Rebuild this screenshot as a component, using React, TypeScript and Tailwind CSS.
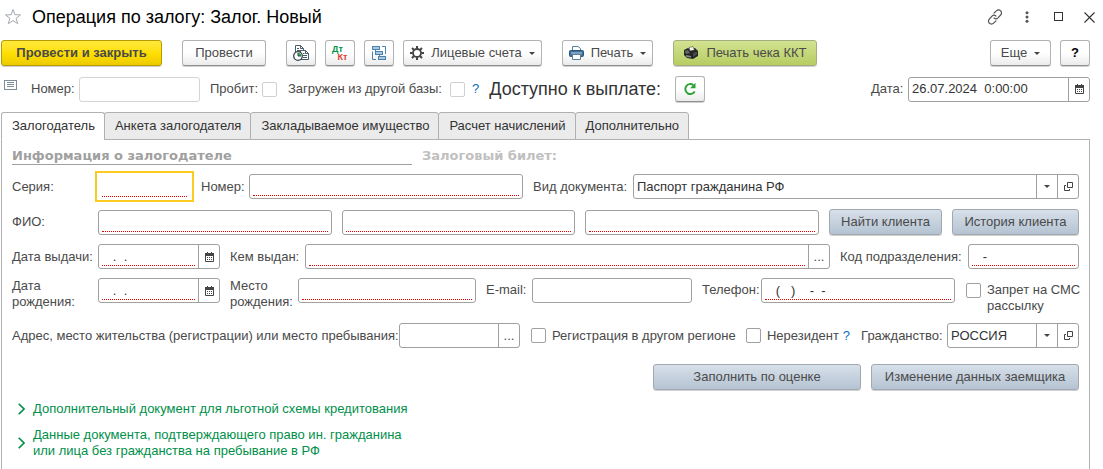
import { useState, type ReactNode } from 'react';
import { clsx } from 'clsx';

const TABS = [
  'Залогодатель',
  'Анкета залогодателя',
  'Закладываемое имущество',
  'Расчет начислений',
  'Дополнительно',
];

/* ---------- icons ---------- */

function StarIcon() {
  return (
    <svg width="18" height="18" viewBox="0 0 18 18" fill="none" stroke="#a3a9b0" strokeWidth="1">
      <path d="M9 1.5l1.9 5.2 5.6.2-4.4 3.4 1.6 5.4L9 12.6l-4.7 3.1 1.6-5.4L1.5 6.9l5.6-.2z" />
    </svg>
  );
}

function LinkIcon() {
  return (
    <svg width="16" height="16" viewBox="0 0 16 16" fill="none" stroke="#555" strokeWidth="1.2" strokeLinecap="round">
      <path d="M7 4.2l2.4-2.4a2.9 2.9 0 0 1 4.2 0 2.9 2.9 0 0 1 0 4.2L11 8.8a2.9 2.9 0 0 1-3.9.2" />
      <path d="M9 11.8l-2.4 2.4a2.9 2.9 0 0 1-4.2 0 2.9 2.9 0 0 1 0-4.2L5 7.2A2.9 2.9 0 0 1 8.9 7" />
    </svg>
  );
}

function DotsIcon() {
  return (
    <svg width="4" height="12" viewBox="0 0 4 12" fill="#555">
      <circle cx="2" cy="1.7" r="1.5" />
      <circle cx="2" cy="6" r="1.5" />
      <circle cx="2" cy="10.3" r="1.5" />
    </svg>
  );
}

function MaximizeIcon() {
  return (
    <svg width="10" height="10" viewBox="0 0 10 10" fill="none" stroke="#333">
      <rect x="0.5" y="0.5" width="8" height="8" />
    </svg>
  );
}

function CloseIcon() {
  return (
    <svg width="11" height="11" viewBox="0 0 11 11" fill="none" stroke="#333" strokeWidth="1.1">
      <path d="M.5.5l10 10M10.5.5l-10 10" />
    </svg>
  );
}

function ReportIcon() {
  return (
    <svg width="18" height="18" viewBox="0 0 18 18" fill="none">
      <path d="M3.5 9V1.500h5l3 3V9" fill="#fff" stroke="#4b5a66" />
      <path d="M8.5 1.500v3h3M5 4.500h2M5 6.500h4" stroke="#4b5a66" />
      <path d="M8.5 15.500v-9h5l3 3v6z" fill="#fff" stroke="#4b5a66" />
      <path d="M13.5 6.500v3h3M11 9.500h1.500M11 11.500h4M11 13.500h4" stroke="#4b5a66" />
      <circle cx="6" cy="12" r="4.3" fill="#fff" stroke="#33424e" strokeWidth="1.3" />
      <path d="M6 12V8.7A3.3 3.3 0 0 1 9.3 12z" fill="#3aa845" />
      <path d="M6 9v3h3" stroke="#33424e" />
    </svg>
  );
}

function StructureIcon() {
  return (
    <svg width="16" height="16" viewBox="0 0 16 16" fill="none" stroke="#4a83ad">
      <path d="M4.5 5v3.500M8.5 9v4.500M8.5 13.500h1" />
      <rect x="1.5" y="1.5" width="7" height="3" fill="#a9c8df" />
      <rect x="4.5" y="6.5" width="7" height="3" fill="#a9c8df" />
      <rect x="7.5" y="11.5" width="7" height="3" fill="#a9c8df" />
      <path d="M11 1.500h3.500V9M1.500 6.500v8H5" />
    </svg>
  );
}

function GearIcon() {
  return (
    <svg width="14" height="14" viewBox="0 0 14 14" fill="none" stroke="#444">
      <circle cx="7" cy="7" r="4" strokeWidth="1.8" />
      <path
        d="M7 0v2.500M7 11.500V14M0 7h2.500M11.500 7H14M2 2l1.800 1.800M10.200 10.200L12 12M2 12l1.800-1.800M10.200 3.800L12 2"
        strokeWidth="2"
      />
    </svg>
  );
}

function PrinterIcon() {
  return (
    <svg width="15" height="14" viewBox="0 0 15 14" fill="none">
      <path d="M3.5 5V.5h5.500l2.500 2V5" fill="#fff" stroke="#5c7f99" />
      <rect x="0.5" y="4.5" width="14" height="6" rx="1" fill="#3f719a" stroke="#2a567b" />
      <path d="M2 7h11" stroke="#b9d2e6" />
      <path d="M3.5 8.500h8v5h-8z" fill="#fff" stroke="#5c7f99" />
    </svg>
  );
}

function CashRegisterIcon() {
  return (
    <svg width="16" height="14" viewBox="0 0 16 14">
      <path d="M1 4l4-2 2 1 5-1 3 3v5l-5 3-6-1-3-3z" fill="#252525" />
      <path d="M6 1.500l4-1 1.500 3.500L7 5z" fill="#f2f2f2" stroke="#333" strokeWidth=".5" />
      <path d="M1.500 5L5 4l2 3-4 1z" fill="#666" />
      <path d="M3 9l5 1v1.500L3.500 11z" fill="#8a8a8a" />
      <path d="M10 7l4-1.500v3L10 11z" fill="#484848" />
    </svg>
  );
}

function RefreshIcon() {
  return (
    <svg width="14" height="14" viewBox="0 0 14 14" fill="none">
      <path d="M11.700 9.500A5 5 0 1 1 10.300 3" stroke="#2da336" strokeWidth="2" />
      <path d="M12.500.8v5.500H7z" fill="#2da336" />
    </svg>
  );
}

function ListIcon() {
  return (
    <svg width="13" height="10" viewBox="0 0 13 10" fill="none" stroke="#7d8d99">
      <rect x="0.5" y="0.5" width="12" height="9" />
      <path d="M3 2.500h7M3 4.500h7M3 6.500h7" />
    </svg>
  );
}

function CalendarIcon() {
  return (
    <svg width="9" height="10" viewBox="0 0 9 10" fill="none">
      <path d="M.5 1.500h8v8h-8z" stroke="#444" />
      <path d="M0 1h9v3H0zM2 0h1v1H2zM6 0h1v1H6z" fill="#444" />
      <path d="M2 5.500h1m1 0h1m1 0h1M2 7.500h1m1 0h1m1 0h1" stroke="#444" />
    </svg>
  );
}

function OpenIcon() {
  return (
    <svg width="9" height="9" viewBox="0 0 9 9" fill="none" stroke="#444">
      <path d="M3.500.5h5v5h-5zM2 3.500H.5v5h5V7" />
    </svg>
  );
}

function Caret() {
  return (
    <svg width="6" height="3" viewBox="0 0 6 3" fill="#444">
      <path d="M0 0h6L3 3z" />
    </svg>
  );
}

function ChevronIcon() {
  return (
    <svg width="7" height="12" viewBox="0 0 7 12" fill="none" stroke="#00904a" strokeWidth="1.6" className="shrink-0">
      <path d="M.7.700L6 6 .7 11.300" />
    </svg>
  );
}

/* ---------- controls ---------- */

const variants = {
  plain: 'border-[#b3b3b3] border-b-[#8f8f8f] bg-linear-to-b from-white from-50% to-[#ebebeb]',
  primary: 'border-[#b89b00] bg-linear-to-b from-[#ffe939] via-[#ffdf00] to-[#eccb00] font-bold',
  green: 'border-[#a3ad7e] bg-linear-to-b from-[#d3e391] to-[#b7cc62]',
  blue: 'border-[#a0a8b0] bg-linear-to-b from-[#d7e0ea] to-[#b5c3d2]',
};

interface ButtonProps {
  children: ReactNode;
  variant?: keyof typeof variants;
  className?: string;
  label?: string;
}

function Button({ children, variant = 'plain', className, label }: ButtonProps) {
  return (
    <button
      type="button"
      aria-label={label}
      className={clsx(
        'flex h-[26px] shrink-0 items-center justify-center rounded-[3px] border whitespace-nowrap shadow-[0_1px_0_#d0d0d0]',
        variants[variant],
        className,
      )}
    >
      {children}
    </button>
  );
}

interface FieldProps {
  id: string;
  label: string;
  value?: string;
  required?: boolean;
  focused?: boolean;
  muted?: boolean;
  hideLabel?: boolean;
  labelClass?: string;
  className?: string;
  action?: 'calendar' | 'more';
}

function Field({ id, label, value = '', required, focused, muted, hideLabel, labelClass, className, action }: FieldProps) {
  return (
    <>
      {!hideLabel && (
        <label htmlFor={id} className={clsx('shrink-0', labelClass)}>
          {label}
        </label>
      )}
      <div
        className={clsx(
          'flex min-w-0 bg-white',
          focused ? 'h-[31px] border-2 border-[#fccb1f] px-[2px] py-px' : 'h-[25px] rounded-[3px] border',
          !focused && (muted ? 'border-[#d4d4d4]' : 'border-[#a0a0a0]'),
          className,
        )}
      >
        <input
          id={id}
          type="text"
          aria-label={hideLabel ? label : undefined}
          defaultValue={value}
          className={clsx(
            'mx-[3px] mb-[2px] min-w-0 flex-1 border-b pt-[3px] text-[#333] outline-none',
            required ? 'border-dotted border-[#f00000]' : 'border-transparent',
          )}
        />
        {action && (
          <button
            type="button"
            aria-label={action === 'calendar' ? 'Выбрать дату' : 'Выбрать'}
            className="flex w-[21px] shrink-0 items-center justify-center border-l border-[#a0a0a0]"
          >
            {action === 'calendar' ? <CalendarIcon /> : '...'}
          </button>
        )}
      </div>
    </>
  );
}

interface PickerProps {
  id: string;
  label: string;
  options: string[];
  labelClass: string;
  className: string;
}

function Picker({ id, label, options, labelClass, className }: PickerProps) {
  return (
    <>
      <label htmlFor={id} className={clsx('shrink-0', labelClass)}>
        {label}
      </label>
      <div className={clsx('flex h-[25px] rounded-[3px] border border-[#a0a0a0] bg-white', className)}>
        <div className="relative flex min-w-0 flex-1">
          <select id={id} className="w-full appearance-none pr-6 pl-[3px] text-[#333] outline-none">
            {options.map((o) => (
              <option key={o}>{o}</option>
            ))}
          </select>
          <span className="pointer-events-none absolute inset-y-0 right-0 flex w-[21px] items-center justify-center border-l border-[#a0a0a0]">
            <Caret />
          </span>
        </div>
        <button
          type="button"
          aria-label="Открыть"
          className="flex w-[21px] shrink-0 items-center justify-center border-l border-[#a0a0a0]"
        >
          <OpenIcon />
        </button>
      </div>
    </>
  );
}

function Checkbox({ id, muted }: { id: string; muted?: boolean }) {
  return (
    <input
      id={id}
      type="checkbox"
      className={clsx(
        'size-[15px] shrink-0 appearance-none rounded-[2px] border bg-white checked:bg-[#fccb1f]',
        muted ? 'border-[#d0d0d0]' : 'border-[#a0a0a0]',
      )}
    />
  );
}

/* ---------- page ---------- */

export default function App() {
  const [tab, setTab] = useState(0);

  return (
    <div className="flex min-h-screen flex-col bg-white pr-[13px] pl-px font-['Liberation_Sans',Arial,sans-serif] text-[13px] leading-4 whitespace-nowrap text-[#4a4a4a]">
      {/* Title bar */}
      <header className="-mr-[5px] flex h-[34px] items-center pl-[3px]">
        <button type="button" aria-label="В избранное">
          <StarIcon />
        </button>
        <h1 className="ml-[10px] flex-1 text-[18px] leading-6 text-black">Операция по залогу: Залог. Новый</h1>
        <div className="flex items-center">
          <button type="button" aria-label="Получить ссылку" className="mr-[22px]">
            <LinkIcon />
          </button>
          <button type="button" aria-label="Меню" className="mr-[25px]">
            <DotsIcon />
          </button>
          <button type="button" aria-label="Развернуть" className="mr-5">
            <MaximizeIcon />
          </button>
          <button type="button" aria-label="Закрыть">
            <CloseIcon />
          </button>
        </div>
      </header>

      {/* Toolbar */}
      <div className="mt-[6px] flex items-center gap-[9px]">
        <Button variant="primary" className="mr-[11px] w-[161px]">Провести и закрыть</Button>
        <Button className="mr-[11px] w-[84px]">Провести</Button>
        <Button label="Отчеты" className="w-[30px]">
          <ReportIcon />
        </Button>
        <Button label="Проводки" className="w-[30px]">
          <span className="flex flex-col text-[9px] leading-[8px] font-bold">
            <span className="pr-[5px] text-[#009646]">Дт</span>
            <span className="pl-[5px] text-[#e03c32]">Кт</span>
          </span>
        </Button>
        <Button label="Структура подчиненности" className="w-[30px]">
          <StructureIcon />
        </Button>
        <Button className="mr-[11px] w-[139px] gap-[7px]">
          <GearIcon />
          Лицевые счета
          <Caret />
        </Button>
        <Button className="mr-[11px] w-[91px] gap-[7px]">
          <PrinterIcon />
          Печать
          <Caret />
        </Button>
        <Button variant="green" className="w-[144px] gap-[7px]">
          <CashRegisterIcon />
          Печать чека ККТ
        </Button>
        <Button className="ml-auto w-[61px] gap-[7px]">
          Еще
          <Caret />
        </Button>
        <Button label="Справка" className="w-[30px] font-bold text-black">?</Button>
      </div>

      {/* Document header */}
      <div className="mt-[10px] flex h-[26px] items-center">
        <span className="mr-[14px] mb-2 ml-[3px]">
          <ListIcon />
        </span>
        <Field id="doc-number" label="Номер:" muted labelClass="w-12" className="w-[121px]" />
        <label htmlFor="punched" className="ml-[10px] w-[52px]">Пробит:</label>
        <Checkbox id="punched" muted />
        <label htmlFor="imported" className="ml-[11px] w-[162px]">Загружен из другой базы:</label>
        <Checkbox id="imported" muted />
        <button type="button" className="ml-[7px] text-[#0a6ebd]">?</button>
        <span className="ml-[10px] w-[186px] text-[18px] leading-6 text-[#333]">Доступно к выплате:</span>
        <Button label="Обновить" className="w-[30px]">
          <RefreshIcon />
        </Button>
        <span className="flex-1" />
        <Field id="doc-date" label="Дата:" value="26.07.2024  0:00:00" labelClass="w-[37px]" className="w-[182px]" action="calendar" />
      </div>

      {/* Tabs */}
      <div role="tablist" className="relative z-10 mt-[10px] flex">
        {TABS.map((name, i) => (
          <button
            key={name}
            type="button"
            role="tab"
            aria-selected={i === tab}
            onClick={() => setTab(i)}
            className={clsx(
              '-mr-px h-7 rounded-t-[3px] border border-[#b0b0b0] pr-[9px] pl-[10px] text-[#333]',
              i === tab ? 'border-b-white bg-white' : 'bg-[#ebebeb]',
            )}
          >
            {name}
          </button>
        ))}
      </div>

      {/* Tab page */}
      <main className="-mt-px flex flex-1 flex-col border border-b-0 border-[#b0b0b0] px-[10px] pt-2">
        <div className="flex gap-[10px] font-['DejaVu_Sans',sans-serif] text-[13px] leading-4 font-bold">
          <h2 className="w-[400px] border-b border-[#a0a0a0] text-[#a0a0a0]">Информация о залогодателе</h2>
          <h2 className="text-[#c0c0c0]">Залоговый билет:</h2>
        </div>

        <div className="mt-[6px] flex h-[31px] items-center">
          <Field id="series" label="Серия:" required focused labelClass="w-[83px]" className="w-[99px]" />
          <Field id="number" label="Номер:" required labelClass="ml-[7px] w-12" className="w-[274px]" />
          <Picker
            id="doc-type"
            label="Вид документа:"
            options={['Паспорт гражданина РФ']}
            labelClass="ml-[10px] w-[100px]"
            className="min-w-0 flex-1"
          />
        </div>

        <div className="mt-[7px] flex items-center">
          <Field id="surname" label="ФИО:" required labelClass="w-[86px]" className="flex-1" />
          <Field id="name" label="Имя" hideLabel required className="ml-[10px] flex-1" />
          <Field id="patronymic" label="Отчество" hideLabel required className="mr-[10px] ml-[10px] flex-1" />
          <Button variant="blue" className="mr-[10px] w-[113px]">Найти клиента</Button>
          <Button variant="blue" className="w-[127px]">История клиента</Button>
        </div>

        <div className="mt-[9px] flex items-center">
          <Field id="issue-date" label="Дата выдачи:" value="   .  ." required labelClass="w-[86px]" className="w-[122px]" action="calendar" />
          <Field id="issuer" label="Кем выдан:" required labelClass="ml-[10px] w-[75px]" className="flex-1" action="more" />
          <Field id="dept-code" label="Код подразделения:" value="   -" required labelClass="ml-[10px] w-[128px]" className="w-[111px]" />
        </div>

        <div className="mt-[9px] flex items-start">
          <Field id="birth-date" label="Дата рождения:" value="   .  ." required labelClass="w-[86px] pr-4 whitespace-normal" className="w-[122px]" action="calendar" />
          <Field id="birth-place" label="Место рождения:" required labelClass="ml-[10px] w-[68px] whitespace-normal" className="flex-1" />
          <Field id="email" label="E-mail:" labelClass="ml-[10px] w-[46px] pt-1" className="w-[160px]" />
          <Field id="phone" label="Телефон:" value="   (   )    -  -" required labelClass="ml-[10px] w-[59px] pt-1" className="w-[194px]" />
          <span className="mr-[6px] ml-[11px] flex pt-[5px]">
            <Checkbox id="no-sms" />
          </span>
          <label htmlFor="no-sms" className="w-[92px] pt-1">
            Запрет на СМС
            <br />
            рассылку
          </label>
        </div>

        <div className="mt-[9px] flex items-center">
          <Field
            id="address"
            label="Адрес, место жительства (регистрации) или место пребывания:"
            labelClass="w-[387px]"
            className="min-w-[121px] flex-1"
            action="more"
          />
          <span className="mr-[6px] ml-[11px] flex">
            <Checkbox id="other-region" />
          </span>
          <label htmlFor="other-region" className="w-[194px]">Регистрация в другом регионе</label>
          <Checkbox id="non-resident" />
          <label htmlFor="non-resident" className="ml-[6px] w-[76px]">Нерезидент</label>
          <button type="button" className="text-[#0a6ebd]">?</button>
          <Picker
            id="citizenship"
            label="Гражданство:"
            options={['РОССИЯ']}
            labelClass="ml-[11px] w-[86px]"
            className="w-[132px]"
          />
        </div>

        <div className="mt-4 flex justify-end gap-[10px]">
          <Button variant="blue" className="w-[208px]">Заполнить по оценке</Button>
          <Button variant="blue" className="w-[208px]">Изменение данных заемщика</Button>
        </div>

        <div className="mt-[11px] flex flex-col items-start gap-[10px] pl-[6px] text-[#00904a]">
          <button type="button" className="flex items-center gap-2 text-left">
            <ChevronIcon />
            Дополнительный документ для льготной схемы кредитования
          </button>
          <button type="button" className="flex items-center gap-2 text-left">
            <ChevronIcon />
            <span>
              Данные документа, подтверждающего право ин. гражданина
              <br />
              или лица без гражданства на пребывание в РФ
            </span>
          </button>
        </div>
      </main>
    </div>
  );
}
